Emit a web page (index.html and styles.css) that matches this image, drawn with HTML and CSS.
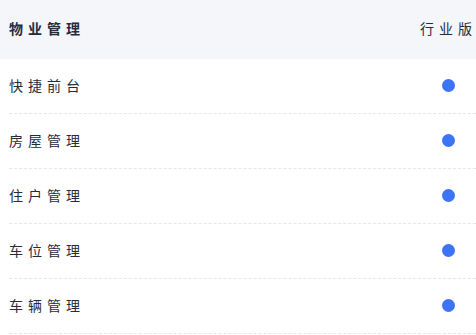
FILE: index.html
```html
<!DOCTYPE html>
<html lang="zh">
<head>
<meta charset="utf-8">
<link rel="stylesheet" href="styles.css">
</head>
<body>
<div class="table">
  <div class="head">
    <span class="title">物业管理</span>
    <span class="edition">行业版</span>
  </div>
  <div class="row"><span class="label">快捷前台</span><span class="dot"></span></div>
  <div class="row"><span class="label">房屋管理</span><span class="dot"></span></div>
  <div class="row"><span class="label">住户管理</span><span class="dot"></span></div>
  <div class="row"><span class="label">车位管理</span><span class="dot"></span></div>
  <div class="row"><span class="label">车辆管理</span><span class="dot"></span></div>
</div>
</body>
</html>
```
FILE: styles.css
```css
html, body {
  margin: 0;
  padding: 0;
  background: #ffffff;
}
.table {
  width: 476px;
  font-family: "Noto Sans CJK SC", "Noto Sans", sans-serif;
  font-size: 14px;
  color: #262b3a;
}
.head {
  height: 56px;
  background: #f5f6fa;
  display: flex;
  align-items: center;
  justify-content: space-between;
  padding: 0 0 3px 9px;
}
.title {
  font-weight: 700;
  letter-spacing: 5px;
}
.edition {
  letter-spacing: 5px;
  margin-right: -1px;
}
.row {
  height: 52px;
  padding-bottom: 2px;
  margin-left: 9px;
  display: flex;
  align-items: center;
  justify-content: space-between;
  border-bottom: 1px dashed #e4e6ea;
}
.label {
  letter-spacing: 5px;
}
.dot {
  width: 13px;
  height: 13px;
  border-radius: 50%;
  background: #3d74f6;
  margin-right: 21px;
}
```
